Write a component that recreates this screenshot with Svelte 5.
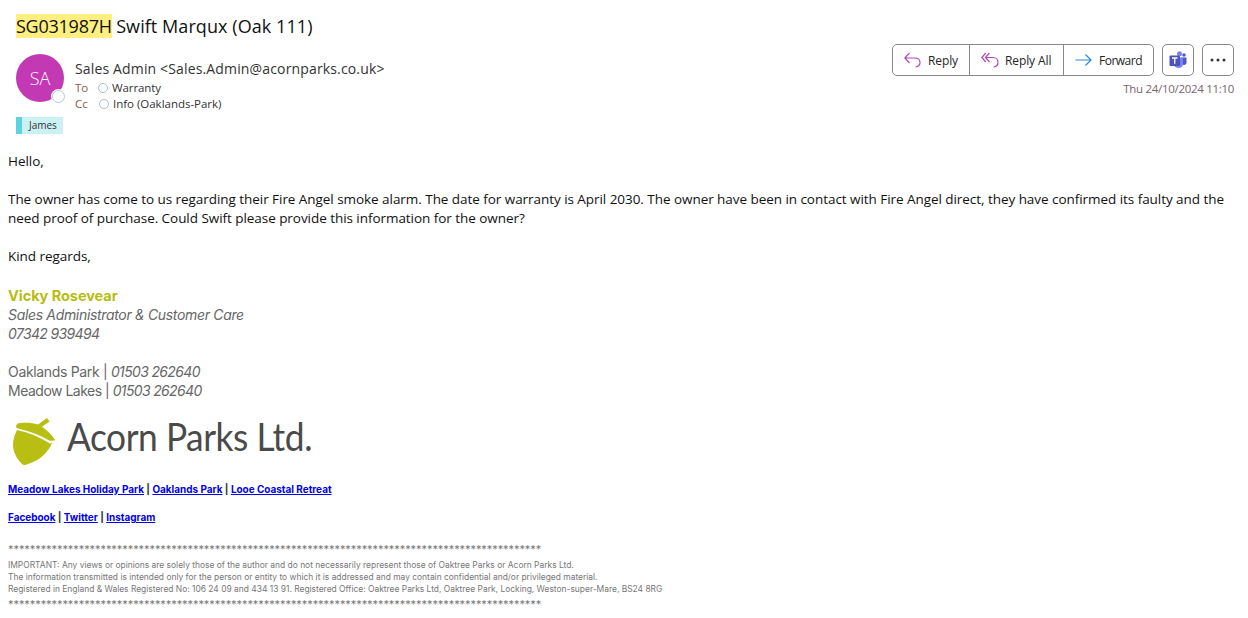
<script>
  const stars = '*'.repeat(98);
</script>

<div class="mail">
  <h1 class="subject"><mark>SG031987H</mark> <span class="subject-rest">Swift Marqux (Oak 111)</span></h1>

  <header class="head">
    <div class="who">
      <div class="avatar">SA<span class="presence"></span></div>
      <div class="addr">
        <div class="from">Sales Admin &lt;Sales.Admin@acornparks.co.uk&gt;</div>
        <div class="line"><span class="lbl">To</span><span class="dot"></span><span>Warranty</span></div>
        <div class="line cc"><span class="lbl">Cc</span><span class="dot dot-cc"></span><span>Info (Oaklands-Park)</span></div>
      </div>
    </div>

    <div class="actions">
      <div class="btnrow">
        <div class="group">
          <button class="btn reply">
            <svg width="17" height="16" viewBox="0 0 17 16" fill="none" stroke="#b146c2" stroke-width="1.2">
              <path d="M5.500 1 L0.800 6 L5.500 11 M0.800 6 H11 C14 6 16 8 16 10.500 C16 12.500 14.500 14.500 11.500 15" />
            </svg>
            Reply
          </button>
          <button class="btn replyall">
            <svg width="18" height="16" viewBox="0 0 18 16" fill="none" stroke="#b146c2" stroke-width="1.2">
              <path d="M4.800 1 L0.800 5.500 L4.800 10" />
              <path d="M8.500 1 L4.500 5.500 L8.500 10 M4.500 5.500 H12 C15 5.500 17 7.800 17 10.500 C17 12.500 15.500 14.500 12.500 15" />
            </svg>
            Reply All
          </button>
          <button class="btn forward">
            <svg width="17" height="16" viewBox="0 0 17 16" fill="none" stroke="#2b88d8" stroke-width="1.2">
              <path d="M0.500 8 H16 M10.500 2.500 L16 8 L10.500 13.500" />
            </svg>
            Forward
          </button>
        </div>
        <button class="icon-btn" aria-label="Teams">
          <svg width="18" height="18" viewBox="0 0 18 18">
            <circle cx="10.500" cy="2.800" r="2.500" fill="#7b83eb" />
            <circle cx="15" cy="4" r="1.800" fill="#5059c9" />
            <path d="M12 6.500 H17.500 V11.500 C17.500 13 16.500 14 15 14 C13.500 14 12 13 12 11.500 Z" fill="#5059c9" />
            <path d="M5 6.500 H14 V13 C14 15.500 12 17 9.500 17 C7 17 5 15.500 5 13 Z" fill="#7b83eb" />
            <rect x="0.500" y="4.500" width="10.500" height="10.500" rx="1" fill="#4b53bc" />
            <path d="M3 7 H8.500 M5.750 7 V12.800" stroke="#fff" stroke-width="1.300" fill="none" />
          </svg>
        </button>
        <button class="icon-btn" aria-label="More">
          <svg width="16" height="4" viewBox="0 0 16 4" fill="#333"><circle cx="2" cy="2" r="1.500" /><circle cx="8" cy="2" r="1.500" /><circle cx="14" cy="2" r="1.500" /></svg>
        </button>
      </div>
      <div class="date">Thu 24/10/2024 11:10</div>
    </div>
  </header>

  <div class="cat">James</div>

  <div class="body">
    <p>Hello,</p>
    <p>The owner has come to us regarding their Fire Angel smoke alarm. The date for warranty is April 2030. The owner have been in contact with Fire Angel direct, they have confirmed its faulty and the need proof of purchase. Could Swift please provide this information for the owner?</p>
    <p>Kind regards,</p>
  </div>

  <div class="sig">
    <div class="name">Vicky Rosevear</div>
    <div><em>Sales Administrator &amp; Customer Care</em></div>
    <div><em class="num">07342 939494</em></div>
    <div class="gap">Oaklands Park | <em class="num">01503 262640</em></div>
    <div class="tight">Meadow Lakes | <em class="num">01503 262640</em></div>
  </div>

  <div class="logo">
    <svg width="43" height="49" viewBox="0 0 43 49" fill="#b8bf12">
      <path d="M3.500 11 C2.500 8 4 6 8 6 C14 5.500 20 6 25 7.500 C28 5.500 31 3 34 1 L36.500 4.500 C34 6.500 31 8 29 10 C34 13 39 18 42 23 C40 24 38 24 36 23.500 C28 18 15 14 3.500 11 Z" />
      <path d="M4 13 C14 15 27 20 37 26.500 L39 26 C36 34 28 43 15 47 C12 48.500 10 48 9 47 C4 42 0 35 0 28 C0 22 2 17 4 13 Z" />
    </svg>
    <span class="logo-text">Acorn Parks Ltd.</span>
  </div>

  <div class="links">
    <p><a href="#a">Meadow Lakes Holiday Park</a> | <a href="#a">Oaklands Park</a> | <a href="#a">Looe Coastal Retreat</a></p>
    <p><a href="#a">Facebook</a> | <a href="#a">Twitter</a> | <a href="#a">Instagram</a></p>
  </div>

  <div class="legal">
    <div class="stars">{stars}</div>
    <div class="small first">IMPORTANT: Any views or opinions are solely those of the author and do not necessarily represent those of Oaktree Parks or Acorn Parks Ltd.</div>
    <div class="small">The information transmitted is intended only for the person or entity to which it is addressed and may contain confidential and/or privileged material.</div>
    <div class="small">Registered in England &amp; Wales Registered No: 106 24 09 and 434 13 91. Registered Office: Oaktree Parks Ltd, Oaktree Park, Locking, Weston-super-Mare, BS24 8RG</div>
    <div class="stars last">{stars}</div>
  </div>
</div>

<style>
  :global(body) {
    background: #fff;
    font-family: "Open Sans", "Noto Sans", sans-serif;
    color: #111;
  }
  .mail {
    padding: 14px 14px 0 8px;
    height: 604px;
    overflow: hidden;
  }
  .subject {
    margin: 0 0 0 8px;
    font-size: 18px;
    font-weight: 400;
    line-height: 25px;
    color: #111;
    letter-spacing: -0.25px;
  }
  .subject-rest {
    letter-spacing: 0.07px;
  }
  mark {
    background: #ffee80;
    color: inherit;
  }
  .head {
    display: flex;
    justify-content: space-between;
    padding-left: 8px;
    margin-top: 5px;
  }
  .who {
    display: flex;
    margin-top: 10px;
  }
  .avatar {
    position: relative;
    width: 48px;
    height: 48px;
    border-radius: 50%;
    background: #c239b3;
    color: #fff;
    font-size: 18px;
    font-weight: 300;
    display: flex;
    align-items: center;
    justify-content: center;
    margin-right: 11px;
  }
  .presence {
    position: absolute;
    right: -1px;
    bottom: -1px;
    width: 11px;
    height: 11px;
    border-radius: 50%;
    background: #fff;
    border: 1.5px solid #b5cbd8;
    box-shadow: 0 0 0 1px #fff;
  }
  .addr {
    padding-top: 4px;
  }
  .from {
    font-size: 14px;
    line-height: 22px;
    color: #333;
    letter-spacing: 0.15px;
  }
  .line {
    display: flex;
    align-items: center;
    font-size: 11.500px;
    line-height: 16px;
    color: #333;
    letter-spacing: -0.1px;
  }
  .cc {
    letter-spacing: -0.02px;
  }
  .lbl {
    width: 23px;
    color: #8a5a4a;
  }
  .dot {
    width: 8px;
    height: 8px;
    border-radius: 50%;
    border: 1px solid #a9bfcc;
    margin-right: 4px;
  }
  .dot-cc {
    margin-left: 1px;
  }
  .actions {
    display: flex;
    flex-direction: column;
    align-items: flex-end;
  }
  .btnrow {
    display: flex;
    gap: 8px;
  }
  .group {
    display: flex;
    height: 32px;
    border: 1px solid #8a8886;
    border-radius: 5px;
    box-sizing: border-box;
  }
  .btn {
    display: flex;
    align-items: center;
    gap: 7px;
    padding: 0 0 0 11px;
    background: transparent;
    border: 0;
    border-right: 1px solid #8a8886;
    font: inherit;
    font-size: 12px;
    color: #242424;
    letter-spacing: -0.1px;
    box-sizing: border-box;
  }
  .reply {
    width: 77px;
  }
  .replyall {
    width: 94px;
    gap: 6px;
  }
  .forward {
    width: 89px;
    border-right: 0;
    letter-spacing: -0.5px;
  }
  .icon-btn {
    width: 32px;
    height: 32px;
    padding: 0;
    display: flex;
    align-items: center;
    justify-content: center;
    background: #fff;
    border: 1px solid #8a8886;
    border-radius: 5px;
  }
  .date {
    margin-top: 5px;
    font-size: 11.500px;
    line-height: 16px;
    color: #7d5f6f;
    letter-spacing: -0.3px;
  }
  .cat {
    margin: 5px 0 0 8px;
    width: 47px;
    height: 17px;
    box-sizing: border-box;
    background: #cbf1f3;
    border-left: 6px solid #5cd4df;
    font-size: 10px;
    line-height: 17px;
    padding-left: 7px;
    color: #333;
  }
  .body {
    margin-top: 18px;
    font-size: 13.500px;
    line-height: 19px;
    color: #111;
    letter-spacing: -0.05px;
  }
  .body p {
    margin: 0 0 19px;
  }
  .sig {
    margin-top: 20px;
    font-family: "Inter", sans-serif;
    font-size: 14px;
    line-height: 19px;
    color: #666;
    letter-spacing: -0.33px;
  }
  .num {
    letter-spacing: -0.65px;
  }
  .tight {
    letter-spacing: -0.5px;
  }
  .name {
    color: #b7bd10;
    font-weight: 700;
    font-size: 14.500px;
    letter-spacing: -0.05px;
  }
  .gap {
    margin-top: 19px;
  }
  .logo {
    display: flex;
    align-items: center;
    gap: 11px;
    margin: 17px 0 0 5px;
    height: 49px;
  }
  .logo-text {
    font-family: "Lato", sans-serif;
    font-size: 38px;
    line-height: 44px;
    color: #4a4a4a;
    letter-spacing: -0.5px;
    margin-top: -11px;
    transform: scaleX(0.93);
    transform-origin: left center;
  }
  .links {
    margin-top: 16px;
    font-family: "Inter", sans-serif;
    font-size: 9.950px;
    font-weight: 700;
    line-height: 14px;
    color: #333;
  }
  .links p {
    margin: 0 0 14px;
  }
  a {
    color: #0000ee;
  }
  .legal {
    margin-top: 19px;
    font-family: "Inter", sans-serif;
    color: #777;
  }
  .stars {
    font-size: 11px;
    line-height: 13px;
    letter-spacing: -0.07px;
  }
  .small {
    font-size: 8.440px;
    line-height: 12px;
  }
  .first {
    margin-top: 3px;
  }
  .last {
    margin-top: 3px;
  }
</style>
